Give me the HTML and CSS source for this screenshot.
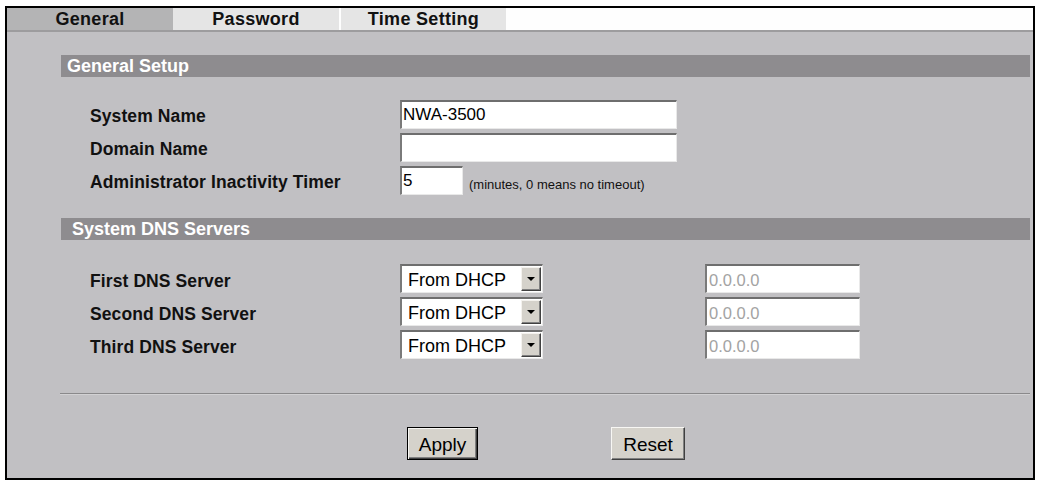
FILE: index.html
```html
<!DOCTYPE html>
<html>
<head>
<meta charset="utf-8">
<link rel="stylesheet" href="styles.css">
</head>
<body>
<div class="frame">
  <div class="tabs">
    <div class="tab tab-active">General</div>
    <div class="tab tab-idle">Password</div>
    <div class="tab tab-idle tab-sep">Time Setting</div>
    <div class="tab-fill"></div>
  </div>
  <div class="content">
    <div class="section-head">General Setup</div>
    <div class="rows">
      <div class="label">System Name</div>
      <div class="ctrl"><div class="field field-wide">NWA-3500</div></div>
      <div class="label">Domain Name</div>
      <div class="ctrl"><div class="field field-wide"></div></div>
      <div class="label">Administrator Inactivity Timer</div>
      <div class="ctrl"><div class="field field-short">5</div><span class="note">(minutes, 0 means no timeout)</span></div>
    </div>
    <div class="section-head section-head-2">System DNS Servers</div>
    <div class="rows rows-dns">
      <div class="label">First DNS Server</div>
      <div class="ctrl"><div class="select"><span class="select-text">From DHCP</span><span class="arrow"></span></div><div class="field field-ip">0.0.0.0</div></div>
      <div class="label">Second DNS Server</div>
      <div class="ctrl"><div class="select"><span class="select-text">From DHCP</span><span class="arrow"></span></div><div class="field field-ip">0.0.0.0</div></div>
      <div class="label">Third DNS Server</div>
      <div class="ctrl"><div class="select"><span class="select-text">From DHCP</span><span class="arrow"></span></div><div class="field field-ip">0.0.0.0</div></div>
    </div>
    <div class="divider"></div>
    <div class="buttons">
      <button class="btn btn-default">Apply</button>
      <button class="btn btn-reset">Reset</button>
    </div>
  </div>
</div>
</body>
</html>
```
FILE: styles.css
```css
html, body {
  margin: 0;
  padding: 0;
  background: #ffffff;
}
body {
  font-family: "Liberation Sans", Arial, sans-serif;
  color: #000;
}
.frame {
  margin: 6px 0 0 5px;
  width: 1030px;
  height: 474px;
  box-sizing: border-box;
  border: 2px solid #000;
  background: #c1c0c3;
  overflow: hidden;
}
.tabs {
  display: flex;
  height: 22px;
  border-bottom: 2px solid #9d9c9e;
  background: #fefefe;
}
.tab {
  width: 166px;
  display: flex;
  align-items: center;
  justify-content: center;
  padding-top: 1px;
  box-sizing: border-box;
  font-weight: bold;
  font-size: 18px;
  letter-spacing: 0.3px;
  color: #111;
}
.tab-active {
  background: #b4b4b5;
}
.tab-idle {
  background: #e5e5e5;
}
.tab-sep {
  margin-left: 2px;
  width: 165px;
}
.tab-fill {
  flex: 1;
  background: #fefefe;
}
.content {
  padding: 23px 3px 0 54px;
}
.section-head {
  height: 22px;
  line-height: 23px;
  background: #8e8c8f;
  color: #fff;
  font-weight: bold;
  font-size: 18px;
  padding-left: 6px;
}
.section-head-2 {
  margin-top: 23px;
  padding-left: 11px;
}
.rows {
  display: grid;
  grid-template-columns: 310px auto;
  grid-auto-rows: 29px;
  row-gap: 4px;
  padding: 23px 0 0 29px;
}
.rows-dns {
  padding-top: 24px;
}
.label {
  display: flex;
  align-items: center;
  padding-top: 3px;
  box-sizing: border-box;
  font-weight: bold;
  font-size: 17.5px;
  letter-spacing: 0.1px;
  color: #111;
}
.rows-dns .label {
  padding-top: 5px;
}
.ctrl {
  display: flex;
  align-items: center;
}
.field {
  height: 29px;
  box-sizing: border-box;
  background: #fff;
  border-style: solid;
  border-width: 2px 1px 1px 2px;
  border-color: #6e6e6e #e9e9e9 #e9e9e9 #7a7a7a;
  font-size: 17px;
  line-height: 26px;
  padding-left: 1px;
  white-space: nowrap;
}
.field-wide {
  width: 277px;
}
.field-short {
  width: 63px;
}
.field-ip {
  width: 155px;
  margin-left: 162px;
  color: #a3a3a3;
  font-size: 16.5px;
  line-height: 29px;
  padding-left: 2px;
}
.note {
  margin-left: 6px;
  margin-top: 8px;
  font-size: 13px;
  color: #111;
}
.select {
  width: 143px;
  height: 29px;
  box-sizing: border-box;
  background: #fff;
  border-style: solid;
  border-width: 2px 1px 1px 2px;
  border-color: #6e6e6e #e9e9e9 #e9e9e9 #7a7a7a;
  display: flex;
  align-items: center;
  justify-content: space-between;
  padding: 0 1px 0 6px;
}
.select-text {
  font-size: 18px;
  padding-top: 3px;
  white-space: nowrap;
}
.arrow {
  width: 20px;
  height: 24px;
  box-sizing: border-box;
  background: #d5d2cb;
  border-style: solid;
  border-width: 1px;
  border-color: #f4f2ee #404040 #404040 #f4f2ee;
  box-shadow: inset -1px -1px #808080;
  position: relative;
}
.arrow::after {
  content: "";
  position: absolute;
  left: 5px;
  top: 9px;
  border-left: 4px solid transparent;
  border-right: 4px solid transparent;
  border-top: 4px solid #000;
}
.divider {
  margin-top: 34px;
  height: 1px;
  background: #8a898b;
  border-bottom: 1px solid #d2d1d3;
  margin-left: -1px;
}
.buttons {
  display: flex;
  gap: 133px;
  padding: 32px 0 0 346px;
}
.btn {
  height: 33px;
  padding: 2px 0 0;
  background: #d5d2cb;
  font-family: "Liberation Sans", Arial, sans-serif;
  font-size: 19px;
  color: #000;
  box-sizing: border-box;
  margin: 0;
}
.btn-default {
  width: 71px;
  border: 1px solid #000;
  box-shadow: inset 1px 1px #f8f7f4, inset -1px -1px #404040, inset -2px -2px #808080;
}
.btn-reset {
  width: 74px;
  border-style: solid;
  border-width: 1px;
  border-color: #f8f7f4 #404040 #404040 #f8f7f4;
  box-shadow: inset -1px -1px #808080;
}
```
